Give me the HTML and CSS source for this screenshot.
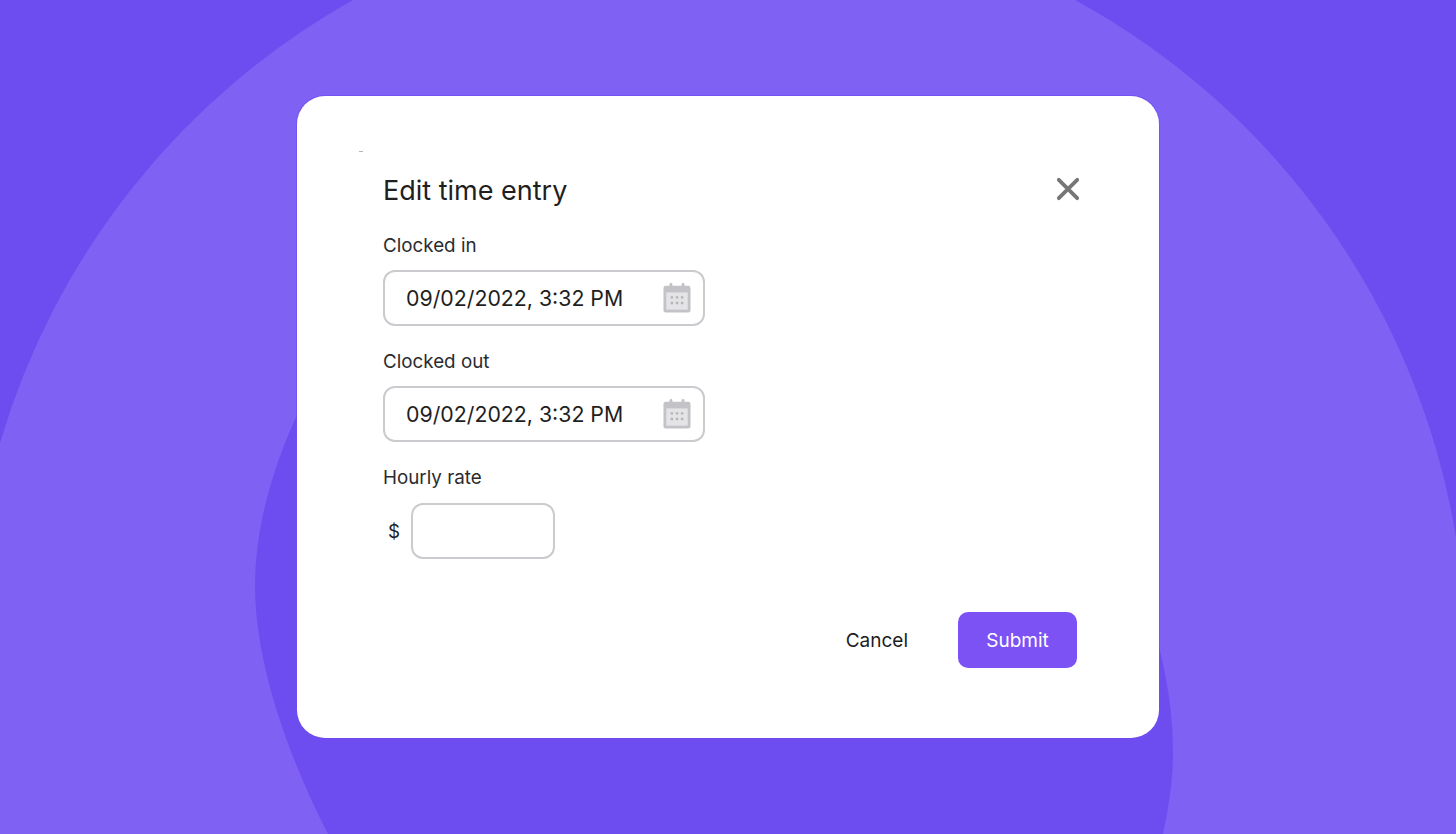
FILE: index.html
```html
<!DOCTYPE html>
<html lang="en">
  <head>
    <meta charset="UTF-8" />
    <meta name="viewport" content="width=device-width, initial-scale=1.0" />
    <title>Edit time entry</title>
    <link rel="stylesheet" href="styles.css">
  </head>
  <body>
    <svg class="backdrop" viewBox="0 0 1456 834" aria-hidden="true">
      <path class="ring" d="M0,443 A750,750 0 0 1 353,0 L1075,0 A750,750 0 0 1 1456,537 L1456,834 L0,834 Z" />
      <path class="hole" d="M297,415 C278,456 255,520 255,585 C255,660 285,750 328,834 L1163,834 C1168,810 1173,782 1173,753 C1173,715 1167,677 1158,643 Z" />
    </svg>
    <section class="card">
      <div class="speck"></div>
      <div class="head">
        <h2>Edit time entry</h2>
        <button class="close" aria-label="Close">
          <svg width="26" height="26" viewBox="0 0 26 26">
            <path d="M3.8,3.8 L22.2,22.2 M22.2,3.8 L3.8,22.2" />
          </svg>
        </button>
      </div>
      <form action="#" class="entry">
        <div class="group">
          <p class="label">Clocked in</p>
          <div class="field">
            <span>09/02/2022, 3:32 PM</span>
            <svg class="cal" width="28" height="30" viewBox="0 0 30 32">
              <rect x="0.5" y="3" width="29" height="28.5" rx="2.5" class="cal-frame" />
              <rect x="7" y="0" width="3" height="6" rx="1.2" class="cal-frame" />
              <rect x="20" y="0" width="3" height="6" rx="1.2" class="cal-frame" />
              <rect x="3.5" y="10" width="23" height="18.5" class="cal-body" />
              <path class="cal-dots" d="M8.2,14h2.6v2.6h-2.6z M13.7,14h2.6v2.6h-2.6z M19.2,14h2.6v2.6h-2.6z M8.2,20h2.6v2.6h-2.6z M13.7,20h2.6v2.6h-2.6z M19.2,20h2.6v2.6h-2.6z" />
            </svg>
          </div>
        </div>
        <div class="group">
          <p class="label">Clocked out</p>
          <div class="field">
            <span>09/02/2022, 3:32 PM</span>
            <svg class="cal" width="28" height="30" viewBox="0 0 30 32">
              <rect x="0.5" y="3" width="29" height="28.5" rx="2.5" class="cal-frame" />
              <rect x="7" y="0" width="3" height="6" rx="1.2" class="cal-frame" />
              <rect x="20" y="0" width="3" height="6" rx="1.2" class="cal-frame" />
              <rect x="3.5" y="10" width="23" height="18.5" class="cal-body" />
              <path class="cal-dots" d="M8.2,14h2.6v2.6h-2.6z M13.7,14h2.6v2.6h-2.6z M19.2,14h2.6v2.6h-2.6z M8.2,20h2.6v2.6h-2.6z M13.7,20h2.6v2.6h-2.6z M19.2,20h2.6v2.6h-2.6z" />
            </svg>
          </div>
        </div>
        <div class="group">
          <p class="label">Hourly rate</p>
          <div class="rate">
            <span class="dollar">$</span>
            <input type="text" name="rate" id="rate" />
          </div>
        </div>
        <div class="actions">
          <button type="button" class="cancel">Cancel</button>
          <button class="submit">Submit</button>
        </div>
      </form>
    </section>
  </body>
</html>
```

FILE: styles.css
```css
* {
  margin: 0px;
  padding: 0px;
  box-sizing: border-box;
}
body {
  height: 100vh;
  overflow: hidden;
  background-color: #6e4df0;
  font-family: Inter, "Liberation Sans", sans-serif;
  display: flex;
  align-items: center;
  justify-content: center;
}
.backdrop {
  position: absolute;
  top: 0;
  left: 0;
  width: 1456px;
  height: 834px;
}
.ring {
  fill: #7f61f3;
}
.hole {
  fill: #6e4df0;
}
.card {
  position: relative;
  width: 862px;
  height: 642px;
  background-color: white;
  box-shadow: 0px 0px 0px 1px rgba(110, 77, 240, 0.7);
  border-radius: 28px;
  padding: 55px 82px 0px 86px;
}
.speck {
  width: 4px;
  height: 1px;
  margin-left: -24px;
  background-color: #b5b5b5;
}
.head {
  display: flex;
  justify-content: space-between;
  align-items: center;
  margin-top: 19px;
  height: 38px;
}
h2 {
  font-size: 27px;
  font-weight: 400;
  color: #1f1f1f;
}
.close {
  border: 0;
  background: none;
  height: 26px;
  margin-right: -4px;
  margin-top: -2px;
}
.close path {
  stroke: #767676;
  stroke-width: 3.8;
  stroke-linecap: round;
  fill: none;
}
.group {
  margin-top: 26px;
}
.group + .group {
  margin-top: 25px;
}
.label {
  font-size: 18.8px;
  line-height: 22px;
  color: #2b2b2f;
}
.field {
  width: 322px;
  height: 56px;
  margin-top: 13px;
  border: 2px solid #cbcbcf;
  border-radius: 12px;
  display: flex;
  align-items: center;
  justify-content: space-between;
  padding: 0px 12px 0px 21px;
  font-size: 21.3px;
  color: #1f1f1f;
}
.cal-frame {
  fill: #c3c3c7;
}
.cal-body {
  fill: #e4e4e7;
}
.cal-dots {
  fill: #b4b4b8;
}
.rate {
  display: flex;
  align-items: center;
  margin-top: 14px;
}
.dollar {
  width: 28px;
  padding-left: 5px;
  font-size: 18.8px;
  color: #1f1f1f;
}
#rate {
  width: 144px;
  height: 56px;
  border: 2px solid #cbcbcf;
  border-radius: 12px;
}
#rate:focus {
  outline: 0;
}
.actions {
  display: flex;
  justify-content: flex-end;
  align-items: center;
  gap: 50px;
  margin-top: 53px;
}
.actions button {
  font-family: inherit;
  font-size: 19px;
  border: 0;
  background: none;
}
.cancel {
  color: #1c1c1c;
}
.actions .submit {
  width: 119px;
  height: 56px;
  background-color: #7c52f5;
  color: white;
  border-radius: 10px;
}
```
